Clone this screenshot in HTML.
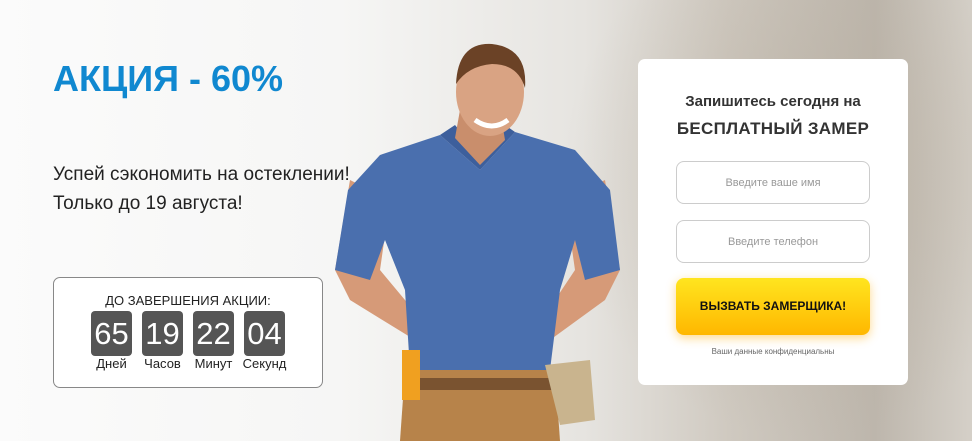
<!DOCTYPE html>
<html><head><meta charset="utf-8"><style>
*{margin:0;padding:0;box-sizing:border-box}
body{width:972px;height:441px;overflow:hidden;font-family:"Liberation Sans","Noto Sans CJK SC",sans-serif;position:relative;
background:linear-gradient(90deg,#fbfbfb 0%,#f6f6f5 35%,#e6e4e0 60%,#cfc9c0 75%,#bdb6ac 90%,#d5d0c8 100%)}
.bg2{position:absolute;left:560px;top:0;width:412px;height:441px;background:radial-gradient(ellipse at 60% 40%,rgba(180,170,155,.5),rgba(255,255,255,0) 70%)}
h1{position:absolute;left:53px;top:58px;color:#1088d0;font-size:36px;font-weight:bold}
.sub{position:absolute;left:53px;top:160px;font-size:19px;line-height:29px;color:#222}
.cd{position:absolute;left:53px;top:277px;width:270px;height:111px;border:1px solid #888;border-radius:7px;background:#fff;text-align:center}
.cd .t{font-size:13px;color:#222;margin-top:15px}
.row{display:flex;justify-content:center;gap:10px;margin-top:3px}
.u{width:41px;text-align:center}
.u b{display:block;height:45px;background:#555;border-radius:4px;color:#fff;font-weight:normal;font-size:31px;line-height:45px}
.u span{font-size:13px;color:#222;display:block;margin-left:-10px;margin-right:-10px}
.form{position:absolute;left:638px;top:59px;width:270px;height:326px;background:#fff;border-radius:7px;text-align:center}
.f1{font-size:15px;font-weight:bold;color:#333;margin-top:34px}
.f2{font-size:17px;font-weight:bold;color:#333;margin-top:9px;letter-spacing:.3px}
.in{width:194px;height:43px;margin:22px auto 0;border:1px solid #ccc;border-radius:8px;font-size:11px;color:#999;line-height:43px}
.in+.in{margin-top:16px}
.btn{width:194px;height:57px;margin:15px auto 0;border-radius:8px;background:linear-gradient(#ffe51f,#ffb700);box-shadow:0 3px 10px rgba(255,170,0,.45);font-weight:bold;font-size:12px;line-height:57px;color:#111}
.note{font-size:8px;color:#666;margin-top:12px}
</style></head><body>
<div class="bg2"></div>
<svg style="position:absolute;left:320px;top:40px" width="320" height="401" viewBox="0 0 320 401">
<path d="M30 140 L15 230 L30 260 L95 300 L110 290 L60 230 L70 160Z" fill="#d69a78"/>
<path d="M285 140 L300 230 L285 260 L230 300 L215 290 L255 230 L245 160Z" fill="#d69a78"/>
<path d="M120 95 L60 115 L28 150 L15 230 L50 240 L65 200 L85 250 L90 330 L230 330 L240 250 L255 200 L265 240 L300 230 L290 150 L255 110 L195 92 L160 130Z" fill="#4a6fae"/>
<path d="M120 95 L160 130 L195 92 L185 85 L160 115 L135 85Z" fill="#3d5f9c"/>
<path d="M140 70 L180 70 L185 100 L160 125 L135 98Z" fill="#c98e6c"/>
<ellipse cx="170" cy="52" rx="34" ry="44" fill="#d9a383"/>
<path d="M136 44 Q138 2 172 4 Q208 8 205 48 Q198 24 172 24 Q148 26 136 44Z" fill="#6b4226"/>
<path d="M155 80 Q172 92 188 80" stroke="#fff" stroke-width="5" fill="none"/>
<path d="M85 330 L235 330 L240 401 L80 401Z" fill="#b7834a"/>
<rect x="85" y="338" width="150" height="12" fill="#7a5330"/>
<rect x="82" y="310" width="18" height="50" fill="#f0a020"/>
<path d="M225 325 L270 320 L275 380 L240 385Z" fill="#c9b48e"/>
</svg>
<h1>АКЦИЯ - 60%</h1>
<div class="sub">Успей сэкономить на остеклении!<br>Только до 19 августа!</div>
<div class="cd"><div class="t">ДО ЗАВЕРШЕНИЯ АКЦИИ:</div>
<div class="row"><div class="u"><b>65</b><span>Дней</span></div><div class="u"><b>19</b><span>Часов</span></div><div class="u"><b>22</b><span>Минут</span></div><div class="u"><b>04</b><span>Секунд</span></div></div></div>
<div class="form"><div class="f1">Запишитесь сегодня на</div><div class="f2">БЕСПЛАТНЫЙ ЗАМЕР</div>
<div class="in">Введите ваше имя</div><div class="in">Введите телефон</div>
<div class="btn">ВЫЗВАТЬ ЗАМЕРЩИКА!</div><div class="note">Ваши данные конфиденциальны</div></div>
</body></html>
